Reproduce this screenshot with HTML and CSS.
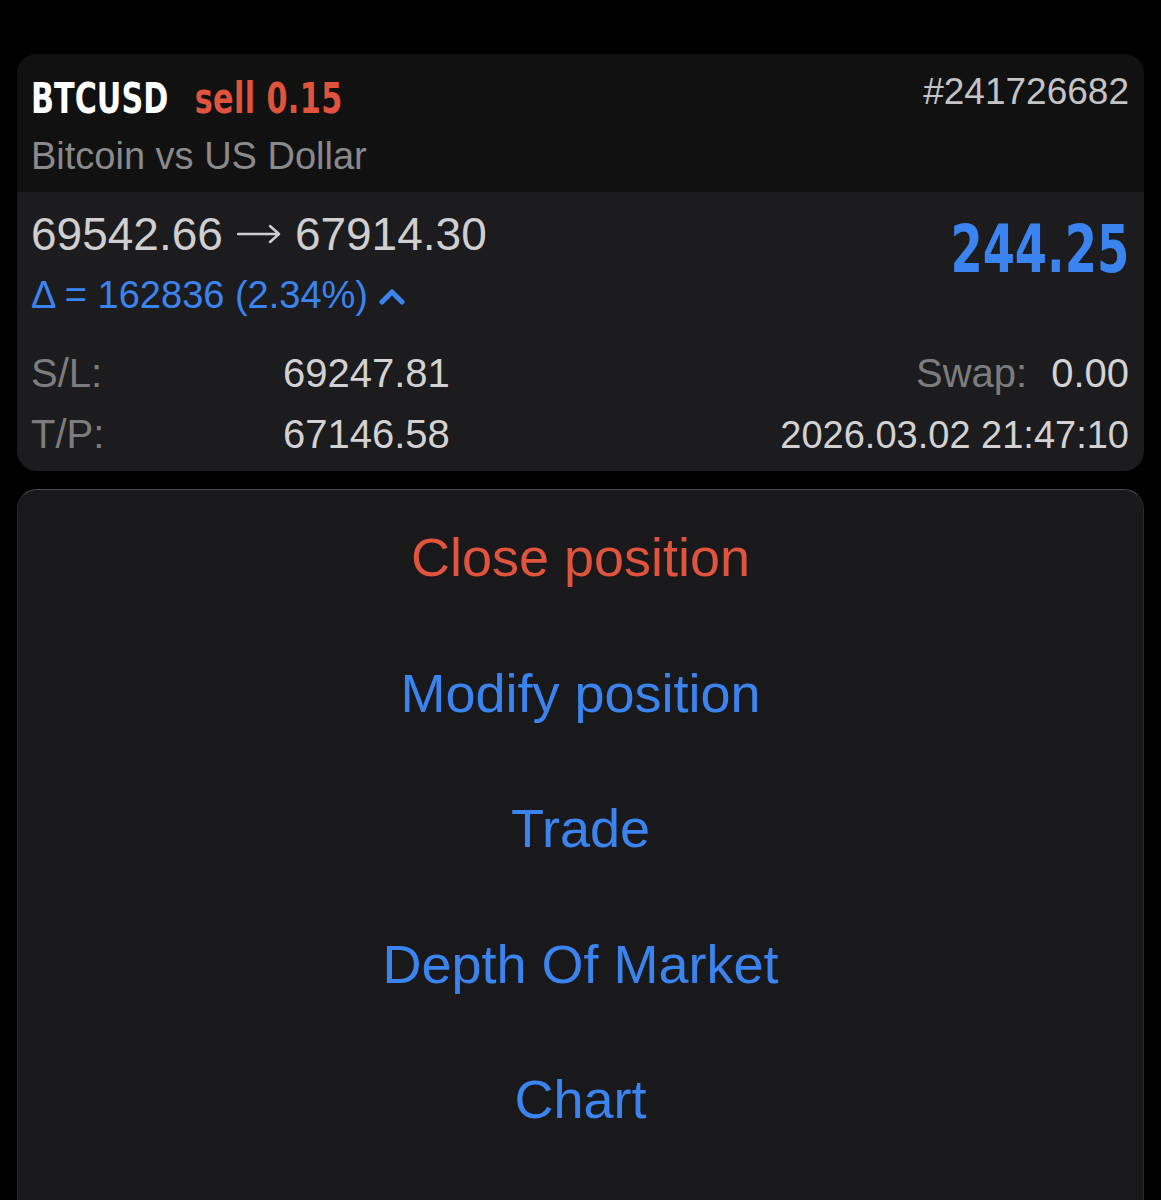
FILE: index.html
```html
<!DOCTYPE html>
<html lang="en">
<head>
<meta charset="utf-8">
<title>BTCUSD position</title>
<link rel="stylesheet" href="styles.css">
</head>
<body>
<div class="page">
  <section class="card">
    <header class="card-head">
      <div class="head-left">
        <div class="title"><span class="symbol">BTCUSD</span><span class="side">sell 0.15</span></div>
        <div class="subtitle">Bitcoin vs US Dollar</div>
      </div>
      <div class="ticket">#241726682</div>
    </header>
    <div class="card-body">
      <div class="price-row">
        <div class="price-left">
          <div class="prices">69542.66<svg class="arrow" width="44" height="20" viewBox="0 0 44 20"><path d="M1 10 H42 M33 2 L42 10 L33 18" fill="none" stroke="#cfcfd1" stroke-width="2.4" stroke-linecap="round" stroke-linejoin="round"/></svg>67914.30</div>
          <div class="delta">Δ = 162836 (2.34%)
            <svg class="chev" width="26" height="18" viewBox="0 0 26 18"><polyline points="3,15 13,5 23,15" fill="none" stroke="#3b84f0" stroke-width="5" stroke-linecap="round" stroke-linejoin="round"/></svg>
          </div>
        </div>
        <div class="profit">244.25</div>
      </div>
      <div class="info-row">
        <span class="label">S/L:</span><span class="value">69247.81</span>
        <span class="right"><span class="label">Swap:</span><span class="value">0.00</span></span>
      </div>
      <div class="info-row">
        <span class="label">T/P:</span><span class="value">67146.58</span>
        <span class="right"><span class="value date">2026.03.02 21:47:10</span></span>
      </div>
    </div>
  </section>

  <nav class="menu">
    <div class="menu-item danger">Close position</div>
    <div class="menu-item">Modify position</div>
    <div class="menu-item">Trade</div>
    <div class="menu-item">Depth Of Market</div>
    <div class="menu-item">Chart</div>
  </nav>
</div>
</body>
</html>
```

FILE: styles.css
```css
html, body {
  margin: 0;
  padding: 0;
  background: #000;
}
body {
  height: 1200px;
  overflow: hidden;
  font-family: "Liberation Sans", Arial, sans-serif;
}
.page {
  padding: 54px 17px 0 17px;
  display: flex;
  flex-direction: column;
  gap: 18px;
}
.card {
  border-radius: 20px;
  overflow: hidden;
  background: #1c1c1e;
}
.card-head {
  background: #111111;
  height: 138px;
  box-sizing: border-box;
  padding: 16px 15px 0 14px;
  display: flex;
  justify-content: space-between;
  align-items: flex-start;
}
.title {
  margin-top: 5px;
  font-family: "DejaVu Sans Condensed", "DejaVu Sans", sans-serif;
  font-weight: 700;
  font-size: 42px;
  line-height: 48px;
  display: flex;
  gap: 34px;
  transform: scaleX(0.8);
  transform-origin: left center;
  white-space: nowrap;
}
.symbol {
  color: #ffffff;
  margin-right: -1px;
}
.side {
  color: #e0533d;
  letter-spacing: 0.5px;
}
.subtitle {
  margin-top: 11px;
  color: #8a8a8c;
  font-size: 38px;
  line-height: 44px;
}
.ticket {
  color: #c4c4c6;
  font-size: 37px;
  line-height: 44px;
}
.card-body {
  padding: 15px 15px 5px 14px;
}
.price-row {
  display: flex;
  justify-content: space-between;
  align-items: flex-start;
}
.prices {
  color: #cfcfd1;
  font-size: 46px;
  line-height: 54px;
  display: flex;
  align-items: center;
}
.arrow {
  display: block;
  margin: 0 14px 0 14px;
}
.delta {
  margin-top: 12px;
  color: #3b84f0;
  font-size: 38px;
  line-height: 44px;
  display: flex;
  align-items: center;
  gap: 11px;
}
.chev {
  display: block;
  margin-top: 2px;
}
.profit {
  color: #3b84f0;
  font-family: "DejaVu Sans Condensed", "DejaVu Sans", sans-serif;
  font-weight: 700;
  font-size: 66px;
  line-height: 80px;
  margin-top: 3px;
  transform: scaleX(0.78);
  transform-origin: right center;
}
.info-row {
  display: flex;
  align-items: baseline;
  font-size: 40px;
  line-height: 61px;
}
.price-row + .info-row {
  margin-top: 26px;
}
.label {
  color: #7c7c7e;
  width: 252px;
  flex-shrink: 0;
}
.value {
  color: #d2d2d4;
}
.date {
  font-size: 38px;
}
.right {
  margin-left: auto;
  display: flex;
  align-items: baseline;
}
.right .label {
  width: auto;
  margin-right: 24px;
}
.menu {
  background: #19191b;
  border: 1px solid #2a2a2c;
  border-top-color: #4a4a4c;
  border-radius: 20px;
  padding: 0 0 80px 0;
}
.menu-item {
  text-align: center;
  color: #3b84f0;
  font-size: 54px;
  line-height: 135.5px;
}
.menu-item.danger {
  color: #e0533d;
}
```
